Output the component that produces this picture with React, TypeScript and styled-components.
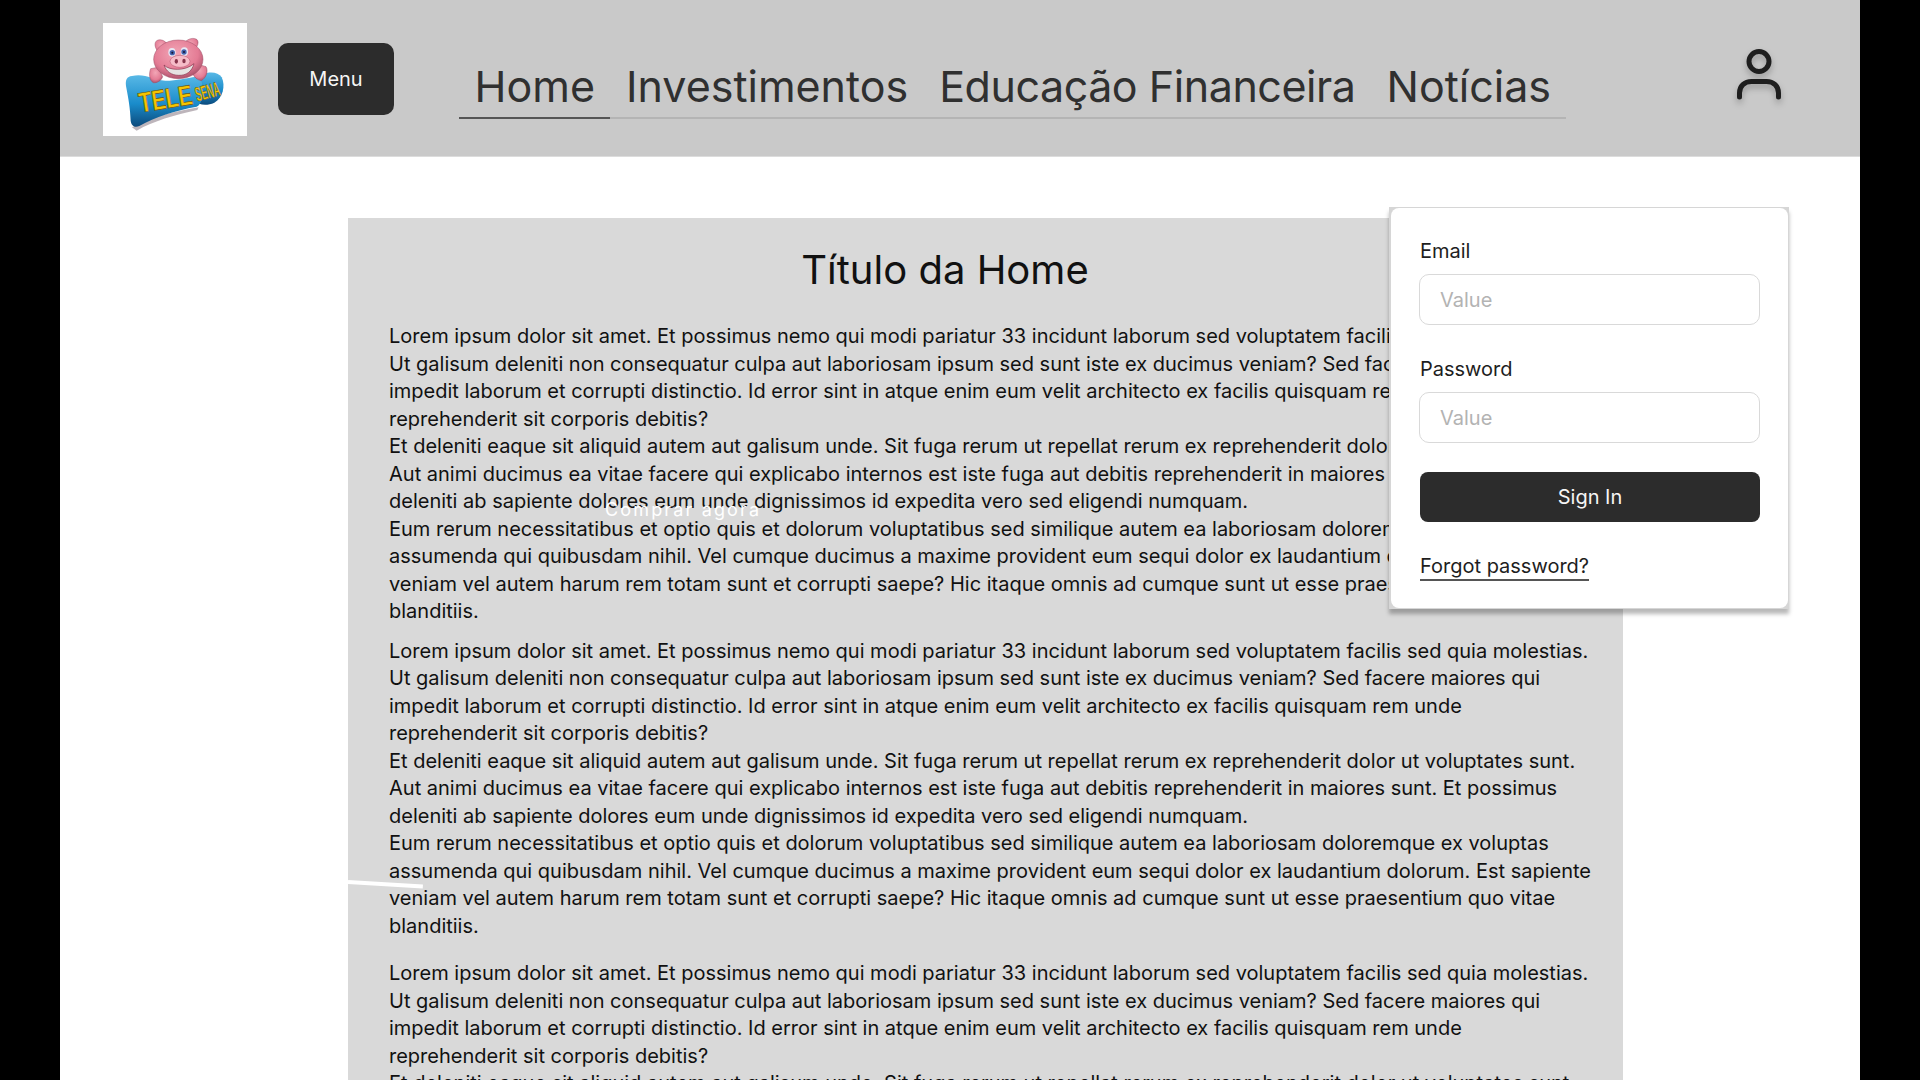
import styled, { createGlobalStyle } from 'styled-components'

const GlobalStyle = createGlobalStyle`
  html, body {
    margin: 0;
    height: 100%;
    background: #000;
    overflow: hidden;
    font-family: Inter, 'Liberation Sans', sans-serif;
  }
  * {
    box-sizing: border-box;
  }
`

const Page = styled.div`
  position: relative;
  width: 1800px;
  height: 1080px;
  margin: 0 auto;
  background: #fff;
  overflow: hidden;
`

const Header = styled.header`
  height: 157px;
  background: #c9c9c9;
  border-bottom: 1px solid #dcdcdc;
  padding: 0 77px 0 43px;
  display: flex;
  align-items: center;
`

const LogoBox = styled.div`
  width: 144px;
  height: 113px;
  background: #fff;
  margin-top: 3px;
  flex-shrink: 0;

  svg {
    display: block;
    width: 100%;
    height: 100%;
  }
`

const MenuButton = styled.button`
  width: 116px;
  height: 72px;
  margin: 1px 0 0 31px;
  border: none;
  border-radius: 10px;
  background: #2c2c2c;
  color: #f5f5f5;
  font: 400 20px Inter, sans-serif;
`

const Nav = styled.nav`
  display: flex;
  align-self: flex-end;
  margin: 0 0 37px 65px;
  border-bottom: 2px solid #b4b4b4;
`

const NavTab = styled.a<{ $active?: boolean; $tracking?: number }>`
  padding: 0 15.5px 2px;
  margin-bottom: -2px;
  font-size: 43px;
  line-height: 57px;
  letter-spacing: ${({ $tracking }) => $tracking ?? 0}px;
  color: #303030;
  border-bottom: 2px solid ${({ $active }) => ($active ? '#555' : 'transparent')};
`

const UserButton = styled.div`
  margin-left: auto;
  margin-top: -7px;
  width: 48px;
  height: 56px;
  line-height: 0;
`

const Main = styled.main`
  padding: 61px 237px 0 288px;
`

const Panel = styled.section`
  position: relative;
  background: #d9d9d9;
  padding: 24px 28px 40px 41px;
  color: #111;
`

const Title = styled.h1`
  margin: 0 94px 25px 0;
  font-size: 40px;
  font-weight: 400;
  line-height: 56px;
  text-align: center;
  color: #111;
`

const TextBlock = styled.div<{ $gap: number }>`
  margin-bottom: ${({ $gap }) => $gap}px;
  font-size: 20px;
  line-height: 27.5px;
`

const BuyLabel = styled.span`
  position: absolute;
  left: 257px;
  top: 277px;
  color: #fff;
  font-size: 18px;
  letter-spacing: 2.15px;
  line-height: 30px;
  white-space: nowrap;
`

const StrayLine = styled.div`
  position: absolute;
  left: 0;
  top: 662px;
  width: 75px;
  height: 3.5px;
  background: #fff;
  transform: rotate(3.5deg);
  transform-origin: left center;
`

const LoginCard = styled.div`
  position: absolute;
  left: 1329px;
  top: 207px;
  width: 400px;
  height: 402px;
  padding: 1px 1px 1px 2px;
  background: #d6d6d6;
  box-shadow: 0 5px 4px rgba(0, 0, 0, 0.28);
`

const LoginForm = styled.form`
  height: 100%;
  padding: 28px 29px 0;
  background: #fff;
  border-radius: 8px;
`

const Field = styled.div`
  margin-bottom: 29px;
`

const Label = styled.label`
  display: block;
  font-size: 20px;
  line-height: 30px;
  margin-bottom: 8px;
  color: #1e1e1e;
`

const Input = styled.input`
  display: block;
  width: 341px;
  height: 51px;
  margin-left: -1px;
  padding: 0 20px;
  border: 1px solid #d9d9d9;
  border-radius: 10px;
  background: #fff;
  font: 400 20px Inter, sans-serif;

  &::placeholder {
    color: #b3b3b3;
  }
`

const SignIn = styled.button`
  display: block;
  width: 340px;
  height: 50px;
  border: none;
  border-radius: 8px;
  background: #2c2c2c;
  color: #f5f5f5;
  font: 400 20px Inter, sans-serif;
`

const Forgot = styled.a`
  display: inline-block;
  margin-top: 32px;
  font-size: 20px;
  line-height: 25px;
  color: #1e1e1e;
  border-bottom: 2px solid #555;
`

const paragraphs = [
  'Lorem ipsum dolor sit amet. Et possimus nemo qui modi pariatur 33 incidunt laborum sed voluptatem facilis sed quia molestias. Ut galisum deleniti non consequatur culpa aut laboriosam ipsum sed sunt iste ex ducimus veniam? Sed facere maiores qui impedit laborum et corrupti distinctio. Id error sint in atque enim eum velit architecto ex facilis quisquam rem unde reprehenderit sit corporis debitis?',
  'Et deleniti eaque sit aliquid autem aut galisum unde. Sit fuga rerum ut repellat rerum ex reprehenderit dolor ut voluptates sunt. Aut animi ducimus ea vitae facere qui explicabo internos est iste fuga aut debitis reprehenderit in maiores sunt. Et possimus deleniti ab sapiente dolores eum unde dignissimos id expedita vero sed eligendi numquam.',
  'Eum rerum necessitatibus et optio quis et dolorum voluptatibus sed similique autem ea laboriosam doloremque ex voluptas assumenda qui quibusdam nihil. Vel cumque ducimus a maxime provident eum sequi dolor ex laudantium dolorum. Est sapiente veniam vel autem harum rem totam sunt et corrupti saepe? Hic itaque omnis ad cumque sunt ut esse praesentium quo vitae blanditiis.',
]

function Logo() {
  return (
    <svg viewBox='9 9 432 339'>
      <defs>
        <radialGradient id='pigSkin' cx='0.45' cy='0.35' r='0.75'>
          <stop offset='0' stopColor='#f2a6b6' />
          <stop offset='0.6' stopColor='#e47c95' />
          <stop offset='1' stopColor='#94405a' />
        </radialGradient>
        <linearGradient id='badgeBlue' x1='0' y1='0' x2='0' y2='1'>
          <stop offset='0' stopColor='#58b8e6' />
          <stop offset='0.55' stopColor='#1a8ccb' />
          <stop offset='1' stopColor='#0c4a7c' />
        </linearGradient>
      </defs>
      <path d='M96 322c50-30 120-46 200-60l-4 8c-70 16-130 32-182 62z' fill='#6d5a68' opacity='0.45' />
      <path d='M285 180c22-26 66-30 80-8 12 24 4 62-22 76-22 10-46 8-60-6z' fill='url(#badgeBlue)' />
      <path
        d='M96 168c42-8 60 12 100 14 36 0 64-8 92-12 14 0 20 14 18 36 -2 28 2 44-16 54-66 12-124 30-172 58-16 6-24-2-26-16-2-40-6-62-14-104-2-18 2-28 18-30z'
        fill='url(#badgeBlue)'
      />
      <g fill='url(#pigSkin)' stroke='#9e4f66' strokeWidth='1.5'>
        <path d='M170 62c14-8 32 4 36 18l-22 24c-14-8-26-32-14-42z' />
        <path d='M290 58c-14-8-34 2-40 16l20 26c16-8 32-32 20-42z' />
        <path d='M152 146c-6 16-4 36 8 42 10 2 24-6 28-18l-14-28z' />
        <path d='M318 140c8 14 0 34-14 42-12-2-22-10-26-22l20-26z' />
        <ellipse cx='235' cy='118' rx='74' ry='58' />
      </g>
      <ellipse cx='216' cy='97' rx='11' ry='13' fill='#e8e8f4' />
      <ellipse cx='253' cy='95' rx='11' ry='13' fill='#e8e8f4' />
      <circle cx='217' cy='98' r='8' fill='#4262ad' />
      <circle cx='252' cy='96' r='8' fill='#4262ad' />
      <circle cx='217' cy='98' r='3' fill='#151530' />
      <circle cx='252' cy='96' r='3' fill='#151530' />
      <ellipse cx='240' cy='124' rx='30' ry='18' fill='#f6bcc8' stroke='#b0546c' strokeWidth='1.5' />
      <ellipse cx='229' cy='124' rx='5' ry='7' fill='#86344b' />
      <ellipse cx='252' cy='123' rx='5' ry='7' fill='#86344b' />
      <path d='M192 135c14 16 62 20 90-4-6 24-24 36-46 35-22 0-38-12-44-31z' fill='#e6e2e2' stroke='#86344b' strokeWidth='2' />
      <g transform='rotate(-9 190 225)'>
        <text
          x='114'
          y='266'
          fontFamily='Liberation Sans, sans-serif'
          fontWeight='700'
          fontSize='84'
          textLength='162'
          lengthAdjust='spacingAndGlyphs'
          fill='#f6c400'
          stroke='#6b5210'
          strokeWidth='2'
        >
          TELE
        </text>
      </g>
      <g transform='rotate(-15 320 210)'>
        <text
          x='284'
          y='236'
          fontFamily='Liberation Sans, sans-serif'
          fontWeight='700'
          fontSize='60'
          textLength='74'
          lengthAdjust='spacingAndGlyphs'
          fill='#f6c400'
          stroke='#6b5210'
          strokeWidth='1.5'
        >
          SENA
        </text>
      </g>
    </svg>
  )
}

function UserIcon() {
  return (
    <svg width='48' height='56' viewBox='0 0 48 56' style={{ filter: 'drop-shadow(0 4px 3px rgba(0,0,0,0.25))' }}>
      <circle cx='24' cy='14.5' r='10' fill='none' stroke='#1e1e1e' strokeWidth='5' />
      <path d='M4.5 50v-4c0-7 5-11.5 12-11.5h15c7 0 12 4.5 12 11.5v4' fill='none' stroke='#1e1e1e' strokeWidth='5' strokeLinecap='round' />
    </svg>
  )
}

export default function App() {
  return (
    <Page>
      <GlobalStyle />
      <Header>
        <LogoBox>
          <Logo />
        </LogoBox>
        <MenuButton type='button'>Menu</MenuButton>
        <Nav>
          <NavTab $active>Home</NavTab>
          <NavTab>Investimentos</NavTab>
          <NavTab $tracking={-0.45}>Educação Financeira</NavTab>
          <NavTab>Notícias</NavTab>
        </Nav>
        <UserButton>
          <UserIcon />
        </UserButton>
      </Header>

      <Main>
        <Panel>
          <Title>Título da Home</Title>
          <TextBlock $gap={12}>
            {paragraphs.map(text => (
              <div key={text}>{text}</div>
            ))}
          </TextBlock>
          <TextBlock $gap={20}>
            {paragraphs.map(text => (
              <div key={text}>{text}</div>
            ))}
          </TextBlock>
          <TextBlock $gap={12}>
            {paragraphs.map(text => (
              <div key={text}>{text}</div>
            ))}
          </TextBlock>
          <BuyLabel>Comprar agora</BuyLabel>
          <StrayLine />
        </Panel>
      </Main>

      <LoginCard>
        <LoginForm>
          <Field>
            <Label>Email</Label>
            <Input placeholder='Value' />
          </Field>
          <Field>
            <Label>Password</Label>
            <Input placeholder='Value' />
          </Field>
          <SignIn type='button'>Sign In</SignIn>
          <Forgot>Forgot password?</Forgot>
        </LoginForm>
      </LoginCard>
    </Page>
  )
}
